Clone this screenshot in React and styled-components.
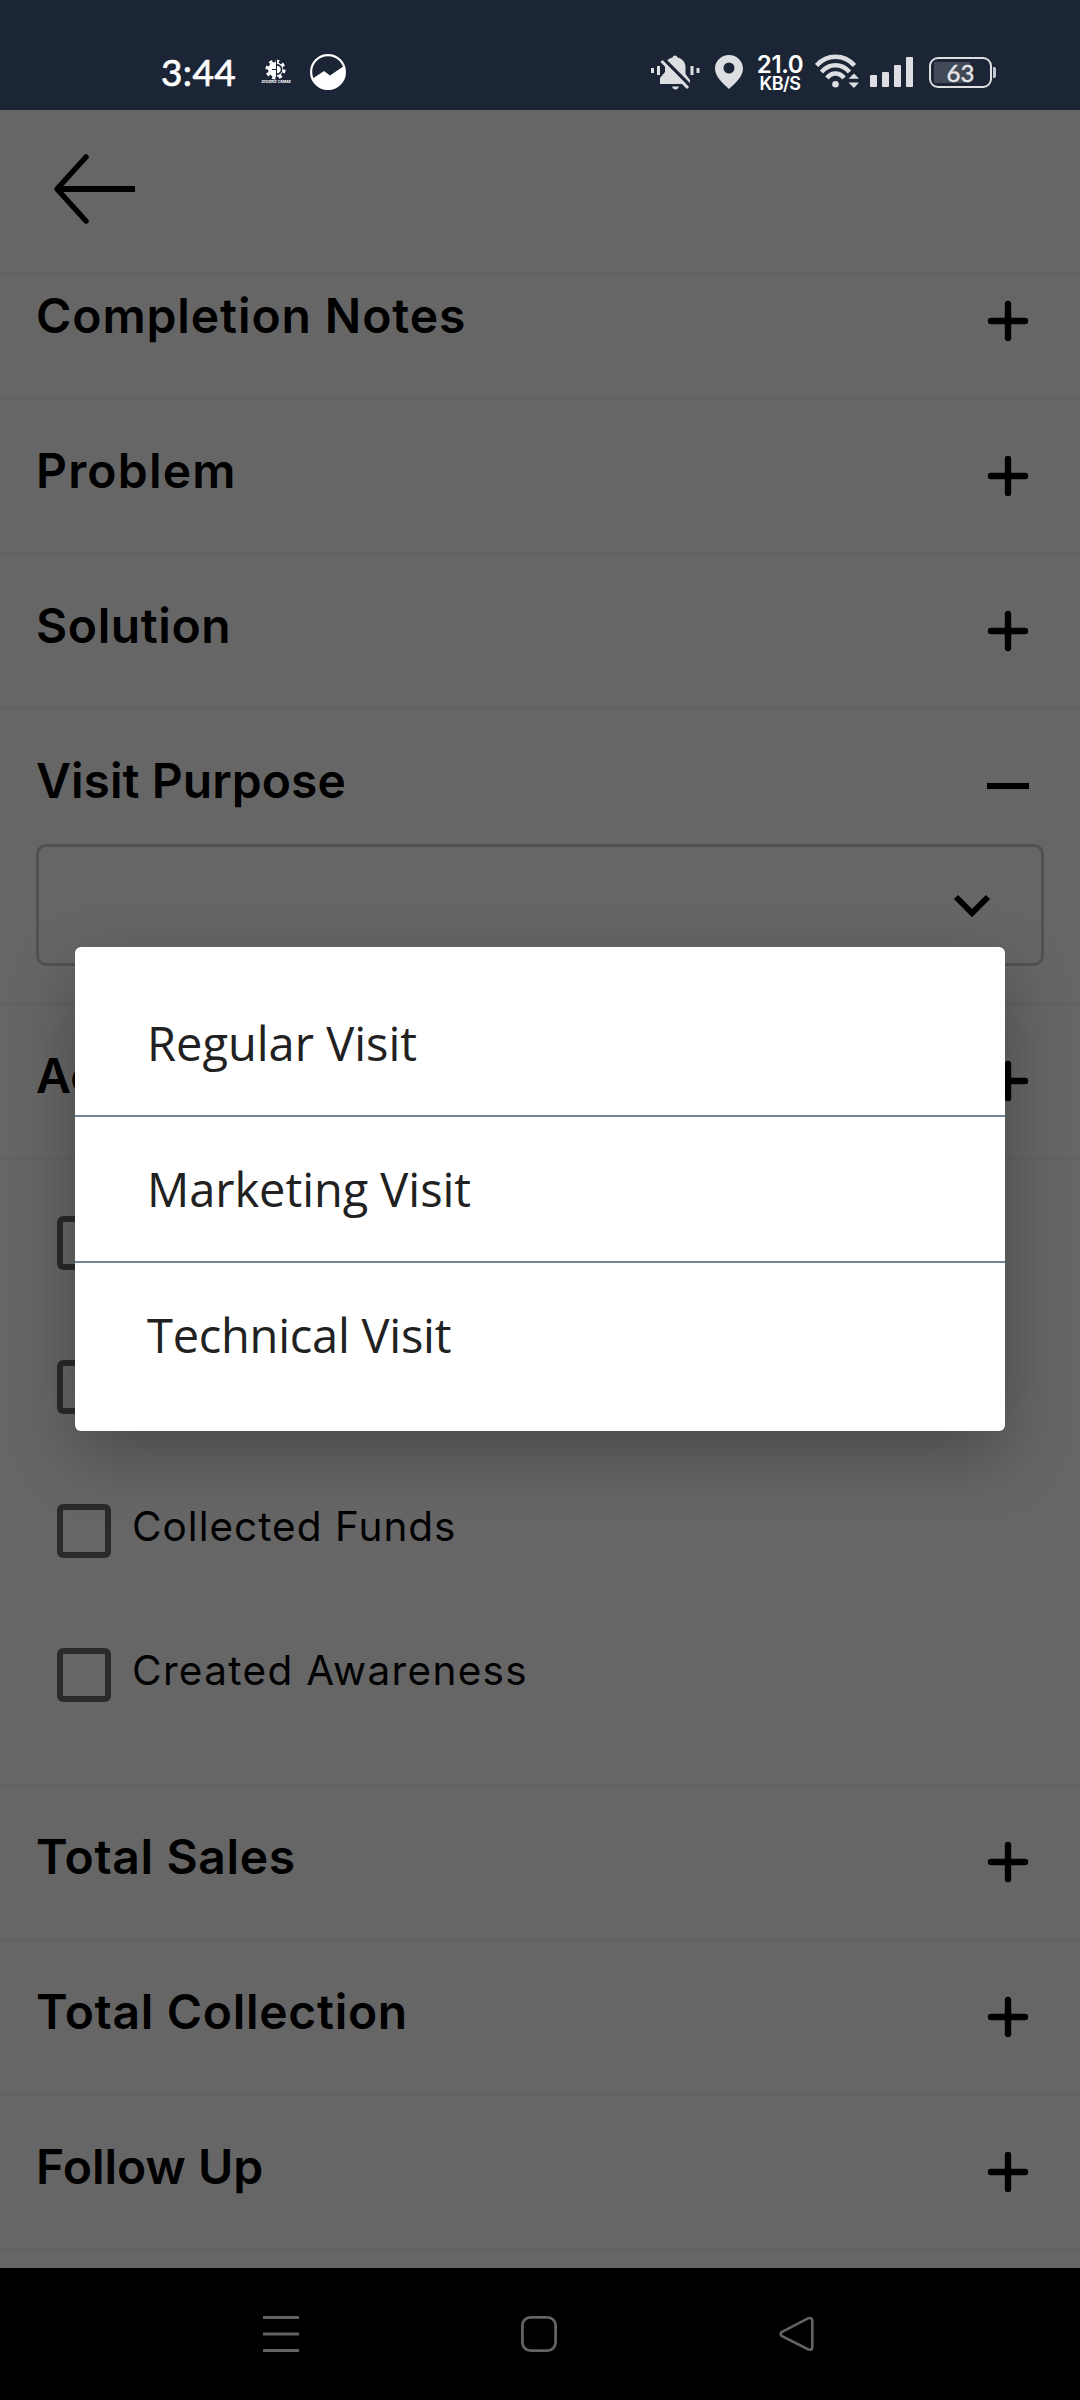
import React, { useState } from 'react';
import styled, { createGlobalStyle } from "styled-components";

const GlobalStyle = createGlobalStyle`
    * {
        box-sizing: border-box;
    }
    body {
        margin: 0;
        background: #000;
    }
`;

const Screen = styled.div`
    position: relative;
    display: flex;
    flex-direction: column;
    width: 1080px;
    height: 2400px;
    overflow: hidden;
    background: white;
    font-family: Inter, "Open Sans", sans-serif;
`;

const StatusBar = styled.div`
    display: flex;
    align-items: flex-start;
    justify-content: space-between;
    height: 110px;
    flex: none;
    padding: 54px 84px 0 161px;
    background: #1c2536;
    color: white;
`;

const StatusGroup = styled.div`
    display: flex;
    align-items: flex-start;
`;

const StatusIcon = styled.svg`
    display: block;
    flex: none;
    margin-left: ${(props) => props.$gap || 0}px;
`;

const Clock = styled.div`
    width: 74px;
    margin-top: -1px;
    font-family: Lato, sans-serif;
    font-size: 37px;
    line-height: 37px;
    letter-spacing: 0.4px;
    -webkit-text-stroke: 0.7px white;
    white-space: nowrap;
`;

const AppLogo = styled.div`
    display: flex;
    flex-direction: column;
    align-items: center;
    width: 26px;
    margin: 5px 0 0 28px;
`;

const LogoCaption = styled.span`
    font-size: 4px;
    line-height: 4px;
    font-weight: 700;
    font-style: italic;
    white-space: nowrap;
`;

const NetSpeed = styled.div`
    display: flex;
    flex-direction: column;
    align-items: center;
    width: 46px;
    margin-left: 14px;
    white-space: nowrap;
`;

const SpeedValue = styled.span`
    margin-top: 1px;
    font-size: 24px;
    line-height: 20px;
    font-weight: 600;
    letter-spacing: -0.4px;
`;

const SpeedUnit = styled.span`
    font-size: 18px;
    line-height: 18px;
    font-weight: 600;
    letter-spacing: -0.5px;
`;

const Battery = styled.div`
    display: flex;
    align-items: center;
    margin: 3px 0 0 16px;
`;

const BatteryBody = styled.div`
    display: flex;
    align-items: center;
    justify-content: center;
    width: 63px;
    height: 31px;
    border: 2.5px solid #dcdee2;
    border-radius: 9px;
    background: linear-gradient(to right, #424957 36px, transparent 36px) 3px 3px / 53px 21px no-repeat;
    color: #e6e7ea;
    font-family: Lato, sans-serif;
    font-size: 24px;
    line-height: 24px;
    -webkit-text-stroke: 0.4px #e6e7ea;
`;

const BatteryTip = styled.div`
    width: 3px;
    height: 11px;
    margin-left: 1px;
    border-radius: 0 2px 2px 0;
    background: #c4c7cd;
`;

const Header = styled.div`
    height: 165px;
    flex: none;
    padding: 43px 0 0 52px;
    border-bottom: 3px solid #f5f5f5;
`;

const Content = styled.div`
    flex: 1;
    min-height: 0;
    overflow: hidden;
`;

// list is scrolled a little under the header
const SectionList = styled.div`
    margin-top: -30px;
`;

const Section = styled.div`
    border-bottom: 3px solid #f5f5f5;
`;

const SectionHead = styled.div`
    display: flex;
    align-items: flex-start;
    justify-content: space-between;
    height: ${(props) => (props.$open ? 134 : 152)}px;
    padding: 55px 51px 0 36px;
`;

const SectionTitle = styled.div`
    margin-top: -1px;
    font-size: 48px;
    line-height: 34px;
    font-weight: 600;
    letter-spacing: ${(props) => props.$spacing || 0}px;
    color: black;
    white-space: nowrap;
`;

const SelectBox = styled.div`
    display: flex;
    align-items: flex-start;
    justify-content: flex-end;
    height: 122px;
    margin: 0 36px 36px;
    padding: 46px 50px 0 0;
    border: 3px solid #cbcbcb;
    border-radius: 10px;
`;

const CheckList = styled.div`
    padding: 11px 0 36px;
`;

const CheckRow = styled.div`
    display: flex;
    align-items: center;
    height: 144px;
    padding-left: 57px;
`;

const CheckBox = styled.div`
    width: 54px;
    height: 54px;
    border: 6px solid #696969;
    border-radius: 6px;
`;

const CheckLabel = styled.div`
    margin: 0 0 8px 21px;
    font-size: 40.5px;
    line-height: 40px;
    letter-spacing: ${(props) => props.$spacing || 0}px;
    color: black;
    white-space: nowrap;
`;

const NavBar = styled.div`
    display: flex;
    align-items: flex-start;
    justify-content: space-between;
    flex: none;
    height: 132px;
    padding: 48px 265px 0 263px;
    background: black;
`;

const Backdrop = styled.div`
    position: absolute;
    top: 110px;
    bottom: 132px;
    left: 0;
    right: 0;
    display: flex;
    align-items: center;
    justify-content: center;
    background: rgba(0, 0, 0, 0.6);
`;

const OptionMenu = styled.div`
    width: 930px;
    padding: 24px 0;
    border-radius: 6px;
    background: white;
    box-shadow: 0 24px 66px rgba(0, 0, 0, 0.28);
`;

const Option = styled.div`
    display: flex;
    align-items: center;
    height: 146px;
    padding-left: 72px;
    border-bottom: 2px solid #778598;
    font-family: "Open Sans", "Noto Sans", sans-serif;
    font-size: 47px;
    line-height: 64px;
    letter-spacing: ${(props) => props.$spacing || 0}px;
    color: #212121;
    white-space: nowrap;

    &:last-child {
        height: 144px;
        border-bottom: none;
    }
`;

const PlusIcon = () => (
    <svg width="42" height="42" viewBox="0 0 42 42">
        <path d="M4 21H38M21 4V38" stroke="black" strokeWidth="6.4" strokeLinecap="round" />
    </svg>
);

const MinusIcon = () => (
    <svg width="42" height="42" viewBox="0 0 42 42">
        <rect x="0" y="18" width="42" height="6" />
    </svg>
);

const BackArrow = () => (
    <svg width="84" height="72" viewBox="0 0 84 72">
        <path d="M34 4L5 36L34 68" fill="none" stroke="black" strokeWidth="5.5" strokeLinecap="round" strokeLinejoin="round" />
        <path d="M5 36H83" stroke="black" strokeWidth="6" />
    </svg>
);

const GearLogo = () => (
    <svg width="22" height="21" viewBox="0 0 22 21">
        <circle cx="10.5" cy="10.5" r="7.5" fill="white" />
        <circle cx="10.5" cy="10.5" r="8.6" fill="none" stroke="white" strokeWidth="3" strokeDasharray="3.4 3.35" />
        <path d="M11 6a4.6 4.6 0 1 1 0 9" fill="none" stroke="#1c2536" strokeWidth="1.6" />
        <path d="M11.5 0V21M7 10.5H11" stroke="#1c2536" strokeWidth="1" />
    </svg>
);

const sections = [
    { id: 1, title: "Completion Notes", spacing: 0.9 },
    { id: 2, title: "Problem", spacing: 1.2 },
    { id: 3, title: "Solution", spacing: 0.6 },
    { id: 4, title: "Visit Purpose", spacing: 0.05, type: "select" },
    { id: 5, title: "Activity" },
    { id: 6, type: "checks" },
    { id: 7, title: "Total Sales", spacing: 0.65 },
    { id: 8, title: "Total Collection", spacing: 0.7 },
    { id: 9, title: "Follow Up" },
];

const activities = [
    { id: 1, label: "" },
    { id: 2, label: "" },
    { id: 3, label: "Collected Funds", spacing: 1 },
    { id: 4, label: "Created Awareness", spacing: 1.35 },
];

const options = [
    { id: 1, label: "Regular Visit" },
    { id: 2, label: "Marketing Visit", spacing: -0.05 },
    { id: 3, label: "Technical Visit", spacing: -0.25 },
];

const Status = () => (
    <StatusBar>
        <StatusGroup>
            <Clock>3:44</Clock>
            <AppLogo>
                <GearLogo />
                <LogoCaption>Dreamz CMMS</LogoCaption>
            </AppLogo>
            <StatusIcon $gap={21} width="36" height="36" viewBox="0 0 36 36">
                <circle cx="18" cy="18" r="16.9" fill="none" stroke="white" strokeWidth="2.2" />
                <path d="M2 25L14 17L20 21.5L34 12A17 17 0 0 1 2 25Z" fill="white" />
            </StatusIcon>
        </StatusGroup>
        <StatusGroup>
            <StatusIcon width="49" height="36" viewBox="0 0 49 36" fill="#dcdee2">
                <path d="M0 14h3v5H0zM6 12h3v9H6zM39.500 12h3v9h-3zM45.500 14h3v5h-3z" />
                <path d="M24 1.500q2 0 2.500 2c5 1 8 5 8 9.500v7l4.500 6v4H9v-6l5-6v-6c0-4 3-7.500 7.500-8.500q.5-2 2.500-2z" />
                <path d="M21 32.500h7q-1 3-3.500 3t-3.500-3z" />
                <path d="M12 4.500L39.500 32" stroke="#1c2536" strokeWidth="3.500" />
                <path d="M10.500 7L37 34" stroke="#dcdee2" strokeWidth="3" />
            </StatusIcon>
            <StatusIcon $gap={15} width="28" height="36" viewBox="0 0 28 36">
                <path fillRule="evenodd" fill="#dcdee2" d="M14 1C6.300 1 0 7 0 14.600C0 22 7 29 14 35C21 29 28 22 28 14.600C28 7 21.700 1 14 1ZM14 8.500a5.500 5.500 0 1 1 0 11a5.500 5.500 0 0 1 0-11Z" />
            </StatusIcon>
            <NetSpeed>
                <SpeedValue>21.0</SpeedValue>
                <SpeedUnit>KB/S</SpeedUnit>
            </NetSpeed>
            <StatusIcon $gap={12} width="44" height="36" viewBox="0 0 44 36">
                <g fill="none" stroke="#dcdee2" strokeWidth="4.6">
                    <path d="M1.500 11.500Q9.500 2.800 20.500 2.800T39.500 11.500" />
                    <path d="M6.500 18Q12.500 11.300 20.500 11.300T34.500 18" />
                    <path d="M12 24Q15.500 19.500 20.500 19.500T29 24" />
                </g>
                <circle cx="20.500" cy="30.300" r="3.300" fill="#dcdee2" />
                <path d="M33.500 24.800L39 19.500L44 24.800zM33.500 28.500H44L39 34z" fill="#dcdee2" />
            </StatusIcon>
            <StatusIcon $gap={11} width="43" height="36" viewBox="0 0 43 36" fill="#dcdee2">
                <rect x="0" y="21" width="7" height="12" rx="1" />
                <rect x="12" y="18" width="7" height="15" rx="1" />
                <rect x="24" y="11" width="7" height="22" rx="1" />
                <rect x="36" y="3" width="7" height="30" rx="1" />
            </StatusIcon>
            <Battery>
                <BatteryBody>63</BatteryBody>
                <BatteryTip />
            </Battery>
        </StatusGroup>
    </StatusBar>
);

const CheckSection = () => (
    <CheckList>
        {activities.map((item) => (
            <CheckRow key={item.id}>
                <CheckBox />
                {item.label && <CheckLabel $spacing={item.spacing}>{item.label}</CheckLabel>}
            </CheckRow>
        ))}
    </CheckList>
);

const App = () => {
    const [menuOpen, setMenuOpen] = useState(true);

    return (
        <Screen>
            <GlobalStyle />
            <Status />
            <Header>
                <BackArrow />
            </Header>
            <Content>
                <SectionList>
                    {sections.map((section) => (
                        <Section key={section.id}>
                            {section.title && (
                                <SectionHead $open={section.type === "select"}>
                                    <SectionTitle $spacing={section.spacing}>{section.title}</SectionTitle>
                                    {section.type === "select" ? <MinusIcon /> : <PlusIcon />}
                                </SectionHead>
                            )}
                            {section.type === "select" && (
                                <SelectBox onClick={() => setMenuOpen(true)}>
                                    <svg width="38" height="26" viewBox="0 0 38 26">
                                        <path d="M3 4L19 20L35 4" fill="none" stroke="black" strokeWidth="6" />
                                    </svg>
                                </SelectBox>
                            )}
                            {section.type === "checks" && <CheckSection />}
                        </Section>
                    ))}
                </SectionList>
            </Content>
            <NavBar>
                <svg width="36" height="36" viewBox="0 0 36 36" stroke="#636363" strokeWidth="3">
                    <path d="M0 1.500H36M0 18H36M0 34.500H36" />
                </svg>
                <svg width="36" height="36" viewBox="0 0 36 36" fill="none" stroke="#636363" strokeWidth="2.800">
                    <rect x="1.400" y="1.400" width="33.200" height="33.200" rx="8" />
                </svg>
                <svg width="36" height="36" viewBox="0 0 36 36" fill="none" stroke="#636363" strokeWidth="2.600" strokeLinejoin="round">
                    <path d="M29.500 2.200L3 15.800Q.200 18 3 20.200L29.500 33.500Q33 34.500 33.300 31.500V4.500Q33 1.300 29.500 2.200Z" />
                </svg>
            </NavBar>
            {menuOpen && (
                <Backdrop>
                    <OptionMenu>
                        {options.map((option) => (
                            <Option key={option.id} $spacing={option.spacing} onClick={() => setMenuOpen(false)}>
                                {option.label}
                            </Option>
                        ))}
                    </OptionMenu>
                </Backdrop>
            )}
        </Screen>
    );
}

export default App;
